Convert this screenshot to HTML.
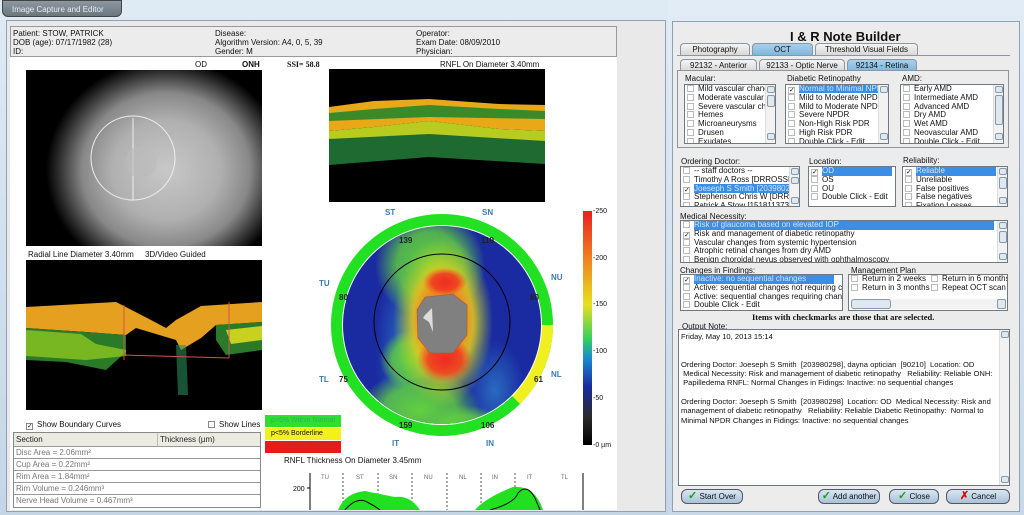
<!DOCTYPE html>
<html><head><meta charset="utf-8"><style>
*{margin:0;padding:0;box-sizing:border-box}
body{width:1024px;height:515px;overflow:hidden;background:#c9dcec;font-family:"Liberation Sans",sans-serif;font-size:8px;color:#111;position:relative}
.a{position:absolute}
.t{position:absolute;white-space:nowrap;line-height:9px}
.lb{position:absolute;background:#fff;border:1px solid #6d7a86;overflow:hidden}
.row{height:8.8px;line-height:8.8px;white-space:nowrap;padding-left:2px;font-size:8px;position:relative}
.cb{display:inline-block;width:7px;height:7px;border:1px solid #bbb;background:#fff;vertical-align:-1px;margin-right:4px;font-size:7px;line-height:5px;text-align:center}
.sel{background:#3b8ee6;color:#cfe4ff}
.sb{position:absolute;right:0;top:0;bottom:0;width:10px;background:#f2f2f2;border-left:1px solid #ddd}
.sb i{position:absolute;left:1px;width:8px;height:7px;background:#dfe7ef;border:1px solid #8899aa;border-radius:2px}
.tab{position:absolute;height:12px;border:1px solid #8a96a2;border-bottom:none;border-radius:4px 4px 0 0;background:linear-gradient(#f4f4f4,#d8d8d8);text-align:center;line-height:11px;font-size:8px}
.tab.on{background:linear-gradient(#a9d0ec,#7eb6dc)}
.btn{position:absolute;height:15px;border:1px solid #556;border-radius:6px;background:linear-gradient(#d8e6f2,#a8c2d8);font-size:8px;line-height:13px;text-align:center}
.ck{color:#1a9a1a;font-weight:bold;font-size:11px}
</style></head><body>
<div class="a" style="left:0;top:0;width:668px;height:515px;background:linear-gradient(#dfeaf4,#c4d6e6)"></div>
<div class="a" style="left:2px;top:0;width:120px;height:17px;background:linear-gradient(#8c97a0,#6b767f);border-radius:0 0 6px 6px;border:1px solid #444"></div>
<div class="t" style="left:12px;top:5px;color:#e8eef2;font-size:8px">Image Capture and Editor</div>
<div class="a" style="left:6px;top:20px;width:660px;height:492px;background:#e9e9e9;border:1px solid #8ea2b4"></div>
<div class="a" style="left:10px;top:57px;width:607px;height:453px;background:#fff"></div>
<div class="a" style="left:10px;top:26px;width:607px;height:31px;background:#ececec;border:1px solid #9a9a9a"></div>
<div class="t" style="left:13px;top:29px">Patient: STOW, PATRICK<br>DOB (age): 07/17/1982 (28)<br>ID:</div>
<div class="t" style="left:215px;top:29px">Disease:<br>Algorithm Version: A4, 0, 5, 39<br>Gender: M</div>
<div class="t" style="left:416px;top:29px">Operator:<br>Exam Date: 08/09/2010<br>Physician:</div>
<div class="t" style="left:195px;top:60px">OD</div>
<div class="t" style="left:242px;top:60px;font-weight:bold">ONH</div>
<div class="t" style="left:287px;top:60px;font-weight:bold;font-family:'Liberation Serif',serif">SSI= 58.8</div>
<div class="t" style="left:440px;top:60px">RNFL On Diameter 3.40mm</div>
<div class="a" style="left:26px;top:70px;width:236px;height:176px;background:radial-gradient(ellipse 120px 110px at 140px 100px,#c8c8c8 0%,#b0b0b0 45%,#888 70%,#222 92%,#000 100%)"></div>
<svg class="a" style="left:26px;top:70px" width="236" height="176"><circle cx="107" cy="88" r="42" fill="none" stroke="#eee" stroke-width="1"/><line x1="107" y1="48" x2="107" y2="130" stroke="#eee"/><circle cx="115" cy="92" r="16" fill="#bbb" opacity=".6"/></svg>
<div class="t" style="left:28px;top:250px">Radial Line Diameter 3.40mm &nbsp;&nbsp;&nbsp; 3D/Video Guided</div>
<svg class="a" style="left:26px;top:260px" width="236" height="150"><rect width="236" height="150" fill="#000"/>
<path d="M0 47 L90 42 L125 60 L140 68 L150 60 L175 46 L236 42 L236 62 L190 65 L175 78 L155 90 L150 80 L110 68 L100 75 L60 72 L0 68Z" fill="#e6a020"/>
<path d="M0 68 L60 72 L100 75 L100 92 L80 110 L40 102 L0 100Z" fill="#2a7a28"/>
<path d="M0 70 L55 74 L70 84 L100 90 L100 96 L60 100 L0 96Z" fill="#9ad020" opacity=".7"/>
<path d="M190 65 L236 62 L236 90 L200 95 L190 80Z" fill="#2a7a2a"/>
<path d="M200 70 L236 66 L236 80 L205 84Z" fill="#c8d020"/>
<path d="M150 85 L160 85 L162 135 L152 135Z" fill="#2a8a5a" opacity=".6"/>
<line x1="98" y1="45" x2="98" y2="100" stroke="#c55" /><line x1="203" y1="42" x2="203" y2="98" stroke="#c55"/><line x1="98" y1="95" x2="203" y2="98" stroke="#c55"/></svg>
<div class="t" style="left:26px;top:420px"><span class="cb" style="border-color:#888">✓</span>Show Boundary Curves</div>
<div class="t" style="left:208px;top:420px"><span class="cb" style="border-color:#888"></span>Show Lines</div>
<div class="a" style="left:13px;top:432px;width:248px;height:76px;border:1px solid #888;background:#fff;color:#777">
<div style="height:14px;background:#ecebe2;border-bottom:1px solid #999;color:#222;line-height:14px;padding-left:2px;position:relative">Section<span style="position:absolute;left:143px;top:0;border-left:1px solid #bbb;padding-left:2px">Thickness (µm)</span></div>
<div style="height:12px;border-bottom:1px solid #999;line-height:12px;padding-left:2px">Disc Area = 2.06mm²</div>
<div style="height:12px;border-bottom:1px solid #999;line-height:12px;padding-left:2px">Cup Area = 0.22mm²</div>
<div style="height:12px;border-bottom:1px solid #999;line-height:12px;padding-left:2px">Rim Area = 1.84mm²</div>
<div style="height:12px;border-bottom:1px solid #999;line-height:12px;padding-left:2px">Rim Volume = 0.246mm³</div>
<div style="height:12px;line-height:12px;padding-left:2px">Nerve Head Volume = 0.467mm³</div></div>
<svg class="a" style="left:329px;top:69px" width="216" height="133"><rect width="216" height="133" fill="#000"/>
<path d="M0 38 L45 32 L100 30 L170 35 L216 36 L216 62 L170 60 L100 52 L45 58 L0 62Z" fill="#e8a818"/>
<path d="M0 44 L45 40 L100 36 L170 40 L216 42 L216 50 L100 48 L0 52Z" fill="#3a8a2a"/>
<path d="M0 62 L45 58 L100 52 L170 60 L216 62 L216 95 L100 88 L0 96Z" fill="#1f6a30"/>
<path d="M0 62 L45 58 L100 52 L170 60 L216 62 L216 72 L100 65 L0 70Z" fill="#b8cc20"/></svg>
<div class="t" style="left:385px;top:208px;color:#3a7ab0;font-weight:bold">ST</div>
<div class="t" style="left:482px;top:208px;color:#3a7ab0;font-weight:bold">SN</div>
<div class="t" style="left:319px;top:279px;color:#3a7ab0;font-weight:bold">TU</div>
<div class="t" style="left:551px;top:273px;color:#3a7ab0;font-weight:bold">NU</div>
<div class="t" style="left:319px;top:375px;color:#3a7ab0;font-weight:bold">TL</div>
<div class="t" style="left:551px;top:370px;color:#3a7ab0;font-weight:bold">NL</div>
<div class="t" style="left:392px;top:439px;color:#3a7ab0;font-weight:bold">IT</div>
<div class="t" style="left:486px;top:439px;color:#3a7ab0;font-weight:bold">IN</div>
<svg class="a" style="left:325px;top:210px" width="240" height="235">
<defs>
<radialGradient id="gB"><stop offset="0" stop-color="#2a6ac0"/><stop offset="1" stop-color="#2a6ac0" stop-opacity="0"/></radialGradient>
<radialGradient id="gG"><stop offset="0" stop-color="#60d040"/><stop offset=".6" stop-color="#60d040" stop-opacity=".8"/><stop offset="1" stop-color="#60d040" stop-opacity="0"/></radialGradient>
<radialGradient id="gY"><stop offset="0" stop-color="#f0c020"/><stop offset=".6" stop-color="#e0d020" stop-opacity=".9"/><stop offset="1" stop-color="#a0d030" stop-opacity="0"/></radialGradient>
<radialGradient id="gO"><stop offset="0" stop-color="#f07020"/><stop offset=".6" stop-color="#f08020" stop-opacity=".8"/><stop offset="1" stop-color="#f08020" stop-opacity="0"/></radialGradient>
<radialGradient id="gR"><stop offset="0" stop-color="#f02a20"/><stop offset=".6" stop-color="#f03020" stop-opacity=".8"/><stop offset="1" stop-color="#f04020" stop-opacity="0"/></radialGradient>
<clipPath id="c"><circle cx="117" cy="115" r="99"/></clipPath></defs>
<circle cx="117" cy="115" r="111" fill="#22e022"/>
<path d="M117 115 L228 115 A111 111 0 0 1 195 194Z" fill="#f0f020"/>
<circle cx="117" cy="115" r="100" fill="#fff"/>
<g clip-path="url(#c)"><rect width="240" height="235" fill="#1a2aa0"/>
<ellipse cx="80" cy="140" rx="30" ry="90" fill="url(#gB)"/>
<ellipse cx="170" cy="180" rx="30" ry="50" fill="url(#gB)"/>
<ellipse cx="105" cy="55" rx="55" ry="55" fill="url(#gG)"/>
<ellipse cx="95" cy="200" rx="60" ry="40" fill="url(#gG)"/>
<ellipse cx="140" cy="220" rx="40" ry="25" fill="url(#gG)"/>
<ellipse cx="85" cy="150" rx="30" ry="30" fill="url(#gG)"/>
<ellipse cx="118" cy="112" rx="50" ry="85" fill="url(#gY)"/>
<ellipse cx="118" cy="110" rx="34" ry="55" fill="url(#gO)"/>
<ellipse cx="120" cy="150" rx="28" ry="22" fill="url(#gR)"/>
<ellipse cx="120" cy="72" rx="22" ry="14" fill="url(#gR)"/>
</g>
<circle cx="117" cy="112" r="68" fill="none" stroke="#000" stroke-width="1"/>
<path d="M100 87 L128 84 L142 95 L142 125 L128 143 L105 143 L93 128 L92 100Z" fill="#808080" stroke="#b05030" stroke-width=".6"/>
<path d="M100 105 L107 98 L108 122 L104 112 L98 108Z" fill="#ddd"/>
<g font-size="8" font-weight="bold" fill="#222" font-family="Liberation Sans"><text x="74" y="33">139</text><text x="156" y="33">119</text><text x="14" y="90">80</text><text x="205" y="90">80</text><text x="14" y="172">75</text><text x="209" y="172">61</text><text x="74" y="218">159</text><text x="156" y="218">106</text></g></svg>
<div class="a" style="left:583px;top:211px;width:9px;height:234px;background:linear-gradient(#e82020,#f08020 20%,#e8e020 40%,#30d060 55%,#1a8ad0 63%,#1a2aa0 75%,#2a2a2a 88%,#000)"></div>
<div class="t" style="left:593px;top:207px;font-size:7px">-250</div>
<div class="t" style="left:593px;top:254px;font-size:7px">-200</div>
<div class="t" style="left:593px;top:300px;font-size:7px">-150</div>
<div class="t" style="left:593px;top:347px;font-size:7px">-100</div>
<div class="t" style="left:593px;top:394px;font-size:7px">-50</div>
<div class="t" style="left:593px;top:441px;font-size:7px">-0 µm</div>
<div class="a" style="left:265px;top:415px;width:76px;height:12px;background:#2ee02e;font-size:7px;padding-left:6px;line-height:12px;color:#3a6">p&gt;5% Within Normal</div>
<div class="a" style="left:265px;top:428px;width:76px;height:12px;background:#f4f020;font-size:7px;padding-left:6px;line-height:12px">p&lt;5% Borderline</div>
<div class="a" style="left:265px;top:441px;width:76px;height:12px;background:#e81a1a;font-size:7px;padding-left:20px;line-height:12px;color:#b33">Outside Normal</div>
<div class="t" style="left:284px;top:456px">RNFL Thickness On Diameter 3.45mm</div>
<svg class="a" style="left:285px;top:468px" width="300" height="42"><line x1="25" y1="5" x2="25" y2="42" stroke="#000"/><line x1="22" y1="20" x2="25" y2="20" stroke="#000"/>
<g stroke="#555" stroke-dasharray="2,2"><line x1="58" y1="5" x2="58" y2="42"/><line x1="93" y1="5" x2="93" y2="42"/><line x1="127" y1="5" x2="127" y2="42"/><line x1="162" y1="5" x2="162" y2="42"/><line x1="196" y1="5" x2="196" y2="42"/><line x1="230" y1="5" x2="230" y2="42"/></g><line x1="298" y1="5" x2="298" y2="42" stroke="#000"/>
<path d="M53 42 Q60 25 80 23 Q100 27 110 29 Q125 27 135 42Z" fill="#20e020"/><path d="M60 42 Q70 30 80 33 Q90 38 95 42" fill="none" stroke="#000"/>
<path d="M190 42 Q200 30 228 19 Q250 17 258 42Z" fill="#20e020"/><path d="M205 42 Q230 35 233 25 Q242 15 250 30 L255 42" fill="none" stroke="#000"/>
<g font-size="6" fill="#666" font-family="Liberation Sans"><text x="36" y="11">TU</text><text x="71" y="11">ST</text><text x="104" y="11">SN</text><text x="139" y="11">NU</text><text x="174" y="11">NL</text><text x="207" y="11">IN</text><text x="242" y="11">IT</text><text x="276" y="11">TL</text></g>
<text x="8" y="23" font-size="7" font-family="Liberation Sans">200</text></svg>
<div class="a" style="left:668px;top:0;width:356px;height:515px;background:linear-gradient(#e2ecf6,#c8d8e8)"></div>
<div class="a" style="left:672px;top:21px;width:348px;height:491px;background:#ececec;border:1px solid #8ea2b4"></div>
<div class="t" style="left:790px;top:30px;font-size:13px;font-weight:bold;line-height:14px">I &amp; R Note Builder</div>
<div class="tab" style="left:680px;top:43px;width:70px">Photography</div>
<div class="tab on" style="left:752px;top:43px;width:61px">OCT</div>
<div class="tab" style="left:815px;top:43px;width:103px">Threshold Visual Fields</div>
<div class="a" style="left:677px;top:55px;width:333px;height:1px;background:#8a96a2"></div>
<div class="tab" style="left:680px;top:59px;width:77px">92132 - Anterior</div>
<div class="tab" style="left:759px;top:59px;width:86px">92133 - Optic Nerve</div>
<div class="tab on" style="left:847px;top:59px;width:70px">92134 - Retina</div>
<div class="a" style="left:677px;top:70px;width:332px;height:78px;border:1px solid #8a96a2"></div>
<div class="t" style="left:685px;top:74px">Macular:</div>
<div class="t" style="left:787px;top:74px">Diabetic Retinopathy</div>
<div class="t" style="left:902px;top:74px">AMD:</div>
<div class="lb" style="left:684px;top:84px;width:92px;height:60px"><div class="row"><span class="cb"></span>Mild vascular changes</div><div class="row"><span class="cb"></span>Moderate vascular cha</div><div class="row"><span class="cb"></span>Severe vascular chan</div><div class="row"><span class="cb"></span>Hemes</div><div class="row"><span class="cb"></span>Microaneurysms</div><div class="row"><span class="cb"></span>Drusen</div><div class="row"><span class="cb"></span>Exudates</div><div class="sb"><i style="top:1px"></i><i style="top:10px;height:12px"></i><i style="bottom:3px"></i></div></div>
<div class="lb" style="left:785px;top:84px;width:104px;height:60px"><div class="row"><span class="cb">✓</span><span class="sel">Normal to Minimal NPDR</span></div><div class="row"><span class="cb"></span>Mild to Moderate NPDR with</div><div class="row"><span class="cb"></span>Mild to Moderate NPDR with</div><div class="row"><span class="cb"></span>Severe NPDR</div><div class="row"><span class="cb"></span>Non-High Risk PDR</div><div class="row"><span class="cb"></span>High Risk PDR</div><div class="row"><span class="cb"></span>Double Click - Edit</div><div class="sb"><i style="top:1px"></i><i style="bottom:3px"></i></div></div>
<div class="lb" style="left:900px;top:84px;width:104px;height:60px"><div class="row"><span class="cb"></span>Early AMD</div><div class="row"><span class="cb"></span>Intermediate AMD</div><div class="row"><span class="cb"></span>Advanced AMD</div><div class="row"><span class="cb"></span>Dry AMD</div><div class="row"><span class="cb"></span>Wet AMD</div><div class="row"><span class="cb"></span>Neovascular AMD</div><div class="row"><span class="cb"></span>Double Click - Edit</div><div class="sb"><i style="top:1px"></i><i style="top:10px;height:30px"></i><i style="bottom:3px"></i></div></div>
<div class="t" style="left:681px;top:157px">Ordering Doctor:</div>
<div class="t" style="left:809px;top:157px">Location:</div>
<div class="t" style="left:903px;top:156px">Reliability:</div>
<div class="lb" style="left:680px;top:166px;width:120px;height:41px"><div class="row"><span class="cb"></span>-- staff doctors --</div><div class="row"><span class="cb"></span>Timothy A Ross [DRROSSNPI]</div><div class="row"><span class="cb">✓</span><span class="sel">Joeseph S Smith [203980298]</span></div><div class="row"><span class="cb"></span>Stephenson Chris W [DRROSS</div><div class="row"><span class="cb"></span>Patrick A Stow [1518113737]</div><div class="sb"><i style="top:1px"></i><i style="top:10px"></i><i style="bottom:2px"></i></div></div>
<div class="lb" style="left:808px;top:166px;width:88px;height:41px"><div class="row"><span class="cb">✓</span><span class="sel" style="display:inline-block;width:70px">OD</span></div><div class="row"><span class="cb"></span>OS</div><div class="row"><span class="cb"></span>OU</div><div class="row"><span class="cb"></span>Double Click - Edit</div></div>
<div class="lb" style="left:902px;top:166px;width:106px;height:41px"><div class="row"><span class="cb">✓</span><span class="sel" style="display:inline-block;width:80px">Reliable</span></div><div class="row"><span class="cb"></span>Unreliable</div><div class="row"><span class="cb"></span>False positives</div><div class="row"><span class="cb"></span>False negatives</div><div class="row"><span class="cb"></span>Fixation Losses</div><div class="sb"><i style="top:1px"></i><i style="top:10px;height:12px"></i><i style="bottom:2px"></i></div></div>
<div class="t" style="left:680px;top:212px">Medical Necessity:</div>
<div class="lb" style="left:680px;top:220px;width:328px;height:43px"><div class="row"><span class="cb"></span><span class="sel" style="display:inline-block;width:300px">Risk of glaucoma based on elevated IOP</span></div><div class="row"><span class="cb">✓</span>Risk and management of diabetic retinopathy</div><div class="row"><span class="cb"></span>Vascular changes from systemic hypertension</div><div class="row"><span class="cb"></span>Atrophic retinal changes from dry AMD</div><div class="row"><span class="cb"></span>Benign choroidal nevus observed with ophthalmoscopy</div><div class="sb"><i style="top:1px"></i><i style="top:10px;height:12px"></i><i style="bottom:2px"></i></div></div>
<div class="t" style="left:680px;top:266px">Changes in Findings:</div>
<div class="t" style="left:851px;top:266px">Management Plan</div>
<div class="lb" style="left:680px;top:274px;width:163px;height:37px"><div class="row"><span class="cb">✓</span><span class="sel" style="display:inline-block;width:140px">Inactive: no sequential changes</span></div><div class="row"><span class="cb"></span>Active: sequential changes not requiring changes</div><div class="row"><span class="cb"></span>Active: sequential changes requiring changes in tr</div><div class="row"><span class="cb"></span>Double Click - Edit</div></div>
<div class="lb" style="left:848px;top:274px;width:160px;height:37px"><div class="row" style="width:160px"><span class="cb"></span>Return in 2 weeks<span style="position:absolute;left:82px"><span class="cb"></span>Return in 6 months</span></div><div class="row"><span class="cb"></span>Return in 3 months<span style="position:absolute;left:82px"><span class="cb"></span>Repeat OCT scan</span></div><div class="a" style="left:2px;top:24px;width:155px;height:10px;background:#f2f2f2"><div class="a" style="left:0;top:0;width:40px;height:10px;border:1px solid #8899aa;border-radius:3px;background:#dfe7ef"></div><div class="a" style="right:0;top:0;width:9px;height:10px;border:1px solid #8899aa;border-radius:2px;background:#dfe7ef"></div></div></div>
<div class="t" style="left:752px;top:313px;font-weight:bold;font-family:'Liberation Serif',serif;font-size:8.5px">Items with checkmarks are those that are selected.</div>
<div class="t" style="left:682px;top:322px">Output Note:</div>
<div class="lb" style="left:678px;top:329px;width:332px;height:157px;padding:2px 12px 0 2px;font-size:7.6px;line-height:9.3px;white-space:normal">Friday, May 10, 2013 15:14<br><br><br>Ordering Doctor: Joeseph S Smith &nbsp;[203980298], dayna optician &nbsp;[90210] &nbsp;Location: OD &nbsp;Medical Necessity: Risk and management of diabetic retinopathy &nbsp; Reliability: Reliable ONH: &nbsp;Papilledema RNFL: Normal Changes in Fidings: Inactive: no sequential changes<br><br>Ordering Doctor: Joeseph S Smith &nbsp;[203980298] &nbsp;Location: OD &nbsp;Medical Necessity: Risk and management of diabetic retinopathy &nbsp; Reliability: Reliable Diabetic Retinopathy: &nbsp;Normal to Minimal NPDR Changes in Fidings: Inactive: no sequential changes<div class="sb"><i style="top:1px"></i><i style="bottom:2px"></i></div></div>
<div class="btn" style="left:681px;top:489px;width:62px"><span class="ck">✓</span> Start Over</div>
<div class="btn" style="left:818px;top:489px;width:62px"><span class="ck">✓</span> Add another</div>
<div class="btn" style="left:889px;top:489px;width:50px"><span class="ck">✓</span> Close</div>
<div class="btn" style="left:946px;top:489px;width:64px"><span style="color:#d01010;font-weight:bold;font-size:11px">✗</span> Cancel</div>
</body></html>
